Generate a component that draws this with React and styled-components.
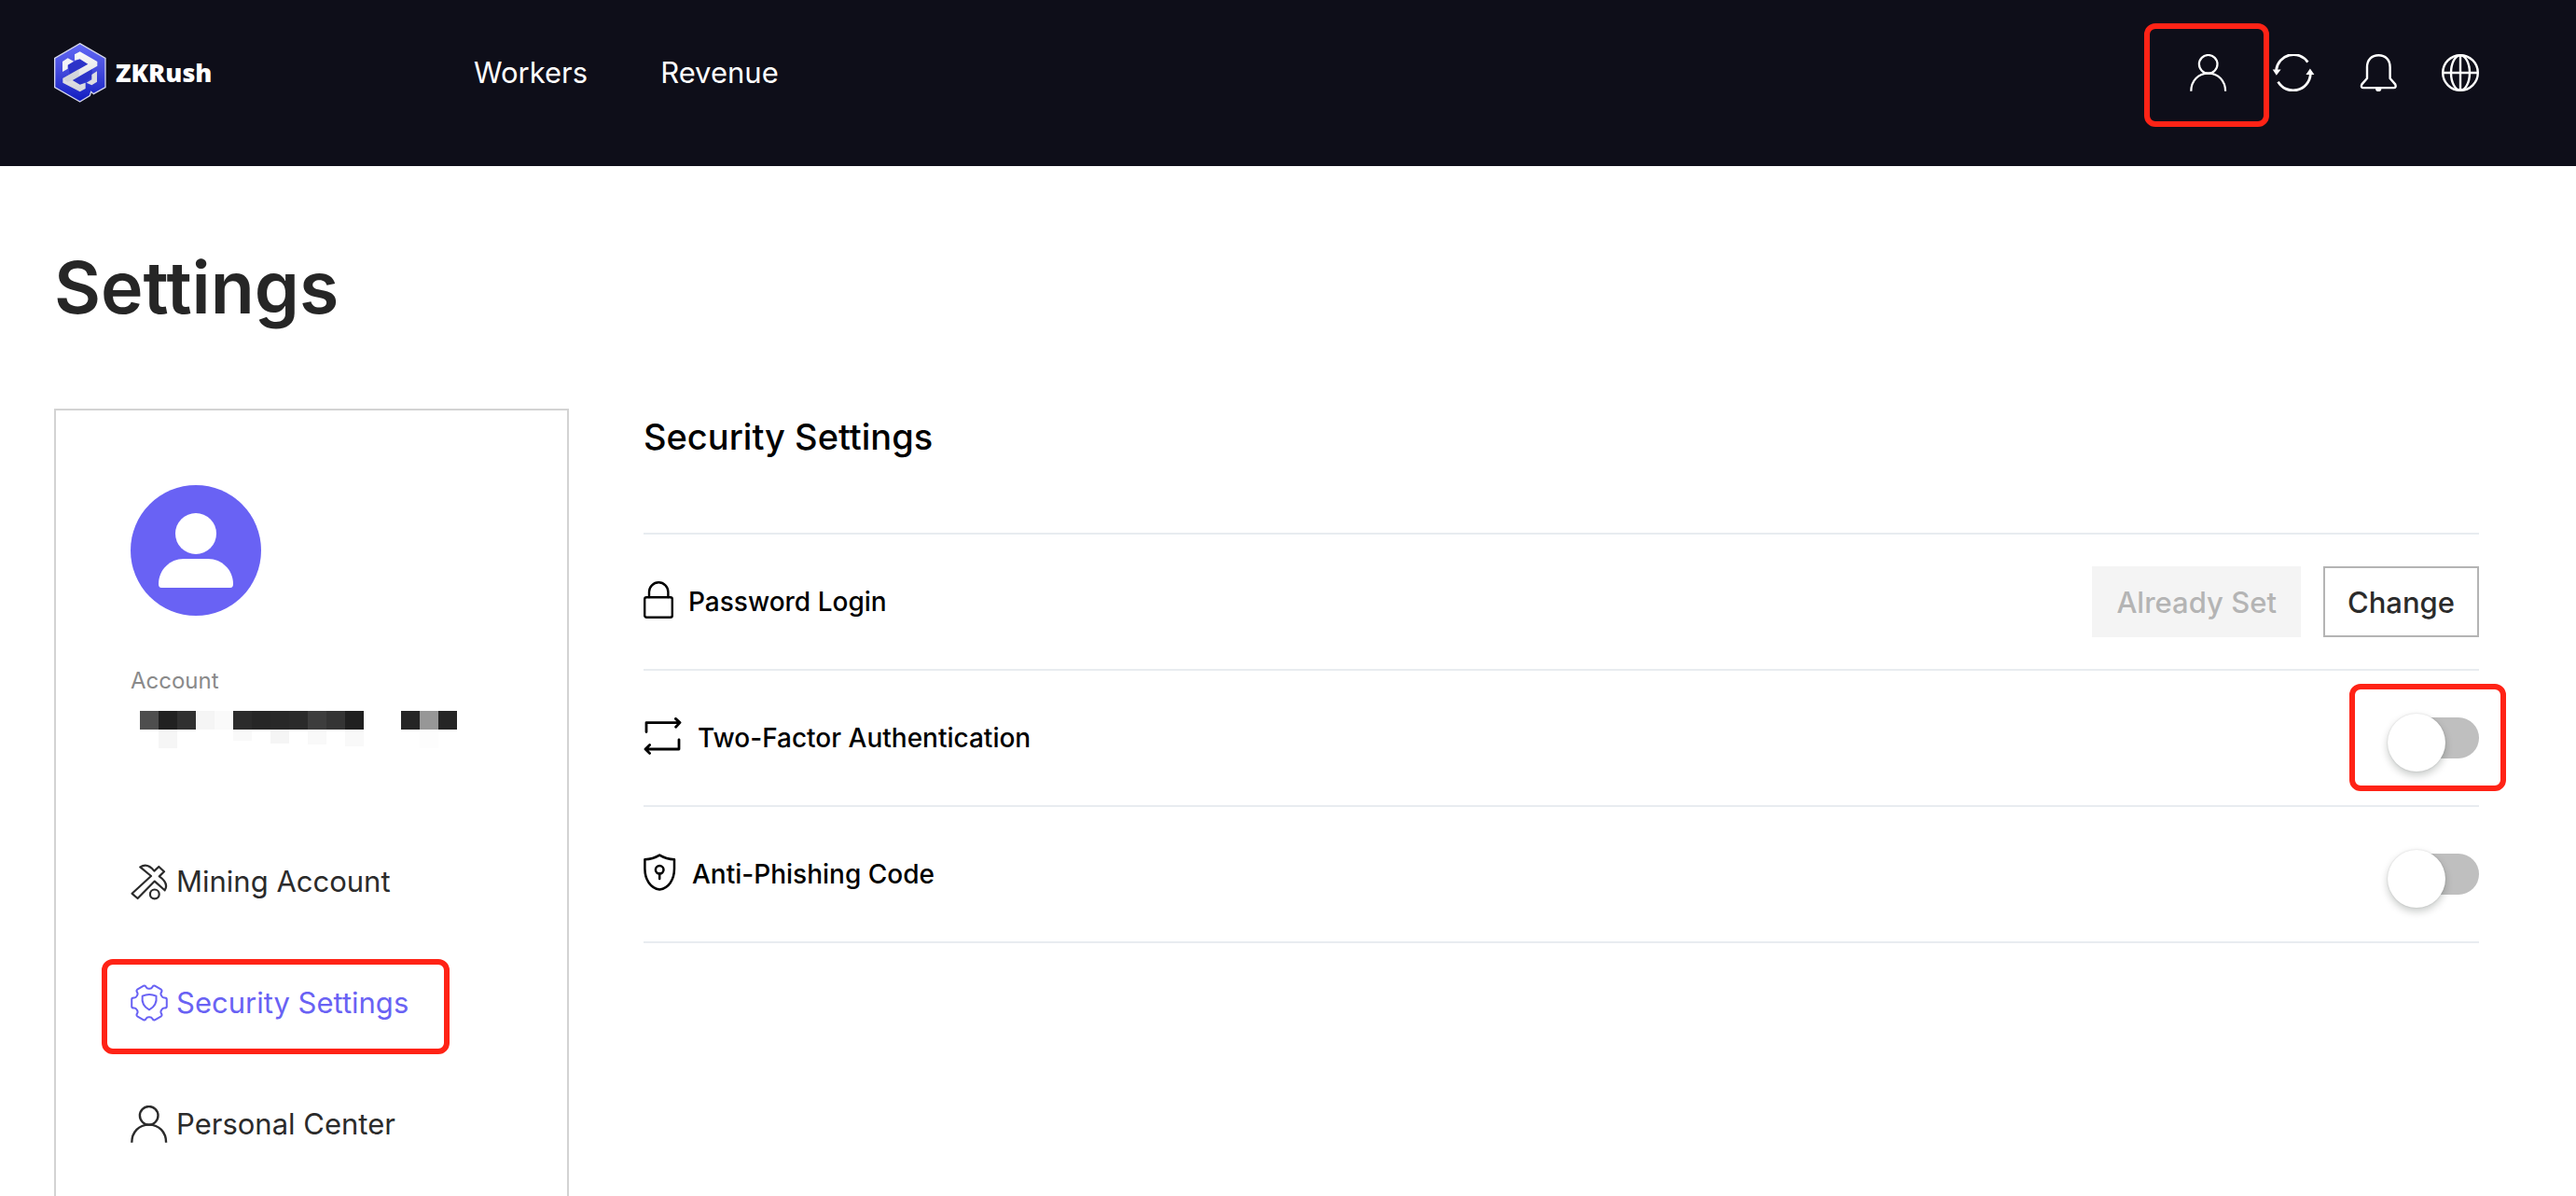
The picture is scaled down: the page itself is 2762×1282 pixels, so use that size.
import React from "react";
import styled, { createGlobalStyle } from "styled-components";

const GlobalStyle = createGlobalStyle`
  *, *::before, *::after { box-sizing: border-box; }
  body {
    margin: 0;
    background: #fff;
    color: #2b2b2b;
    font-family: Inter, "Liberation Sans", Arial, sans-serif;
  }
  h1, h2, p, ul { margin: 0; padding: 0; }
`;

const Page = styled.div`
  min-height: 100vh;
  display: flex;
  flex-direction: column;
`;

const Header = styled.header`
  display: flex;
  align-items: center;
  padding: 46px 104px 68px 58px;
  background: #0e0e19;
  color: #fff;
`;

const Brand = styled.a`
  display: flex;
  align-items: center;
  gap: 10px;
  min-width: 450px;
  color: #fff;
  text-decoration: none;
  font-family: "Noto Sans", "Open Sans", sans-serif;
  font-size: 27px;
  font-weight: 900;
  line-height: 40px;
`;

const TopNav = styled.nav`
  display: flex;
  flex: 1;
  gap: 78px;
`;

const TopLink = styled.a`
  color: #fff;
  text-decoration: none;
  font-size: 31px;
  line-height: 40px;
`;

const HeaderActions = styled.div`
  display: flex;
  gap: 48px;
`;

const IconButton = styled.button`
  position: relative;
  display: flex;
  padding: 0;
  border: 0;
  background: none;
  color: inherit;
`;

const Highlight = styled.span`
  position: absolute;
  inset: ${(p) => p.$inset};
  border: 6px solid #ff2316;
  border-radius: 12px;
  pointer-events: none;
`;

const Title = styled.h1`
  padding: 82px 58px;
  color: #262626;
  font-size: 77px;
  font-weight: 600;
  line-height: 96px;
`;

const Content = styled.div`
  flex: 1;
  display: grid;
  grid-template-columns: 552px minmax(0, 1fr);
  gap: 80px;
  padding: 0 104px 0 58px;
`;

const Sidebar = styled.aside`
  padding: 80px 80px 32px;
  border: 2px solid #d3d3d3;
  border-bottom: 0;
`;

const AccountLabel = styled.p`
  margin: 54px 0 16px;
  color: #8a8a8a;
  font-size: 24px;
  line-height: 32px;
`;

const Block = styled.svg`
  display: block;
`;

const SideList = styled.ul`
  display: grid;
  justify-items: start;
  gap: 90px;
  margin-top: 123px;
  list-style: none;
`;

const SideLink = styled.a`
  position: relative;
  display: flex;
  align-items: center;
  gap: 9px;
  color: ${(p) => (p.$active ? "#6962f4" : "#2b2b2b")};
  text-decoration: none;
  font-size: 31px;
  line-height: 40px;
  white-space: nowrap;
`;

const SectionTitle = styled.h2`
  margin-bottom: 73px;
  color: #000;
  font-size: 38px;
  font-weight: 500;
  line-height: 60px;
`;

const Rows = styled.div`
  border-top: 2px solid #e8ecf0;
`;

const Row = styled.div`
  display: flex;
  align-items: center;
  justify-content: space-between;
  min-height: 146px;
  border-bottom: 2px solid #e8ecf0;
`;

const RowLabel = styled.label`
  display: flex;
  align-items: center;
  gap: 16px;
  color: #000;
  font-size: 28px;
  font-weight: 500;
  line-height: 40px;

  svg { margin-bottom: 4px; }
`;

const RowActions = styled.div`
  position: relative;
  display: flex;
  gap: 24px;
`;

const Button = styled.button`
  height: 76px;
  padding: 0 24px;
  border: 2px solid #b4b4b4;
  border-radius: 0;
  background: #fff;
  color: #2b2b2b;
  font-family: inherit;
  font-size: 31px;
  font-weight: 500;

  &:disabled {
    border-color: #f4f4f4;
    background: #f4f4f4;
    color: #b4b4b4;
  }
`;

const Switch = styled.input`
  appearance: none;
  position: relative;
  width: 90px;
  height: 44px;
  margin: 0;
  border-radius: 22px;
  background: #bfbfbf;

  &::before {
    content: "";
    position: absolute;
    top: -4px;
    left: -8px;
    width: 62px;
    height: 62px;
    border-radius: 50%;
    background: #fff;
    box-shadow: 0 4px 8px rgba(0, 20, 10, 0.22), 0 0 2px rgba(0, 0, 0, 0.15);
  }

  &:checked { background: #6962f4; }
  &:checked::before { left: 36px; }
`;

const line = { fill: "none", stroke: "currentColor", strokeLinecap: "round", strokeLinejoin: "round" };

const Logo = () => (
  <svg width="56" height="64" viewBox="54 78 168 192" aria-hidden="true">
    <defs>
      <linearGradient id="hex" x1="0" y1="0" x2="0" y2="1">
        <stop offset="0" stopColor="#6168f6" />
        <stop offset="0.4" stopColor="#4a50e0" />
        <stop offset="1" stopColor="#101cc0" />
      </linearGradient>
      <linearGradient id="steel" x1="0" y1="0" x2="0" y2="1">
        <stop offset="0" stopColor="#fafafa" />
        <stop offset="1" stopColor="#d4d5da" />
      </linearGradient>
    </defs>
    <path d="M137 80 219 127V221L181 242 173 235 169 248 137 267 56 221V127Z" fill="url(#hex)" stroke="#d4d6ea" strokeWidth="4" />
    <path d="M137 130 165 147 105 181 98 148Z" fill="#2c33c8" />
    <path d="M176 161 176 190 137 212 113 198Z" fill="#2c33c8" />
    <path d="M120 115 137 106 193 138V152L113 198 137 212 155 206V225L137 235 82 206V192L163 146 137 130 120 134Z" fill="url(#steel)" />
    <path d="M81 138 98 127 117 137 98 149V161L81 171Z" fill="#f4f4f6" />
    <path d="M192 169V203L175 214 158 206 175 196V180Z" fill="#dcdde2" />
    <path d="M82 192 134 162 134 186 113 198 97 203Z" fill="#c3c5cd" opacity="0.5" />
  </svg>
);

const UserIcon = ({ width = 2.2 }) => (
  <svg width="40" height="40" viewBox="0 0 40 40" aria-hidden="true" {...line} strokeWidth={width} strokeLinecap="butt">
    <circle cx="19.7" cy="10.8" r="9.8" />
    <path d="M1.3 39.8C1.3 28.4 9 20.6 19.7 20.6S38.1 28.4 38.1 39.8" />
  </svg>
);

const RefreshIcon = () => (
  <svg width="46" height="40" viewBox="0 0 46 40" aria-hidden="true" {...line} strokeWidth="2.8" strokeLinecap="butt">
    <path d="M38.4 8.6A18.6 18.6 0 0 0 4.6 17" />
    <path d="M6.6 29.6A18.6 18.6 0 0 0 41.3 21.5" />
    <path d="M.7 16.4H9.6L4.8 22.8ZM36.4 22H45.4L40.9 15.6Z" fill="currentColor" stroke="none" />
  </svg>
);

const BellIcon = () => (
  <svg width="40" height="40" viewBox="0 0 40 40" aria-hidden="true" {...line} strokeWidth="2.4">
    <path d="M8 26V14C8 6 13 1.3 20.3 1.3S32.6 6 32.6 14V26L38.2 32.4Q39.6 36.1 36.4 36.1H4.2Q.9 36.1 2.4 32.4Z" />
    <path d="M17 37H23.4A3.2 3.2 0 0 1 17 37Z" fill="currentColor" stroke="none" />
  </svg>
);

const GlobeIcon = () => (
  <svg width="40" height="40" viewBox="0 0 40 40" aria-hidden="true" {...line} strokeWidth="2.4" strokeLinecap="butt">
    <circle cx="20" cy="20" r="18.8" />
    <ellipse cx="20" cy="20" rx="10" ry="18.8" />
    <path d="M20 1V39M1 20H39" />
  </svg>
);

const MiningIcon = () => (
  <svg width="40" height="40" viewBox="0 0 40 40" aria-hidden="true" {...line} strokeWidth="2.2">
    <path d="M10.3 4.4Q18-.6 25.4 8.6L30.3 4 36 9.3 30.8 14.4Q41.4 22 36.6 29.3L25.8 19.6 7.6 38 1.6 32.8 22 14Z" />
    <circle cx="25.8" cy="33.4" r="4.9" />
  </svg>
);

// Six-toothed outline: wide tooth tips joined by flat-bottomed dips.
const polar = (deg, r) => {
  const a = (deg * Math.PI) / 180;
  return `${(20 + r * Math.cos(a)).toFixed(2)} ${(20 + r * Math.sin(a)).toFixed(2)}`;
};
const gearPath =
  `M${polar(-12, 19.2)}` +
  [0, 60, 120, 180, 240, 300]
    .map((t) =>
      [
        `L${polar(t + 12, 19.2)}`,
        `Q${polar(t + 17, 19.4)} ${polar(t + 19, 17)}`,
        `Q${polar(t + 21, 15.2)} ${polar(t + 30, 15.2)}`,
        `Q${polar(t + 39, 15.2)} ${polar(t + 41, 17)}`,
        `Q${polar(t + 43, 19.4)} ${polar(t + 48, 19.2)}`,
      ].join("")
    )
    .join("") +
  "Z";

const GearIcon = () => (
  <svg width="40" height="40" viewBox="0 0 40 40" aria-hidden="true" {...line} strokeWidth="2">
    <path d={gearPath} />
    <path d="M12.7 12.6Q20 9.2 27.5 12.6Q28.8 22.8 20 27.4Q11.3 22.8 12.7 12.6Z" />
  </svg>
);

const LockIcon = () => (
  <svg width="32" height="40" viewBox="0 0 32 40" aria-hidden="true" {...line} strokeWidth="2.4">
    <rect x="1.2" y="17.2" width="29.6" height="21.6" rx="2" />
    <path d="M6 17V11.5A10.2 10.2 0 0 1 26.4 11.5V17" />
  </svg>
);

const SwapIcon = () => (
  <svg width="42" height="40" viewBox="0 0 42 40" aria-hidden="true" {...line} strokeWidth="2.8">
    <path d="M3 15.5V5.6H39M34.4 1.4 39 5.6 34.6 10.2" />
    <path d="M38 23.8V34H2M6.6 29.4 2 34 6.6 38.4" />
  </svg>
);

const ShieldIcon = () => (
  <svg width="36" height="40" viewBox="0 0 36 40" aria-hidden="true" {...line} strokeWidth="2.5">
    <path d="M17.2 1.6Q10 6 1.4 6.2V16C1.4 28 7.5 37 17.2 38.6 27 37 33 28 33 16V6.2Q24.5 6 17.2 1.6Z" />
    <circle cx="17.2" cy="17.3" r="4.3" />
    <path d="M17.2 21.6V27" />
  </svg>
);

const Avatar = () => (
  <Block width="140" height="140" viewBox="0 0 140 140" role="img" aria-label="Avatar">
    <circle cx="70" cy="70" r="70" fill="#6962f4" />
    <circle cx="70" cy="52" r="22" fill="#fff" />
    <path d="M57 79H83C98 79 110 91 110 106Q110 110 107 110H33Q30 110 30 106C30 91 42 79 57 79Z" fill="#fff" />
  </Block>
);

const CELL = 20;
const maskCells = [
  "#4e4e4e", "#212121", "#303030", "#f5f5f5", "#fafafa", "#2b2b2b", "#262626", "#282828", "#2a2a2a",
  "#3d3d3d", "#343434", "#202020", null, null, "#252525", "#979797", "#252525",
];
const maskShadows = [
  [1, "#f6f6f6", 20], [5, "#f9f9f9", 12], [7, "#f5f5f5", 15], [9, "#f9f9f9", 16],
  [11, "#f9f9f9", 18], [15, "#fdfdfd", 20],
];

const MaskedAccount = () => (
  <Block width="350" height="40" viewBox="-10 0 350 40" role="img" aria-label="Hidden account name" shapeRendering="crispEdges">
    {maskCells.map((c, i) => c && <rect key={i} x={i * CELL} width={CELL} height={CELL} fill={c} />)}
    {maskShadows.map(([i, c, h]) => (
      <rect key={i} x={i * CELL} y={CELL} width={CELL} height={h} fill={c} />
    ))}
  </Block>
);

export default function App() {
  return (
    <Page>
      <GlobalStyle />
      <Header>
        <Brand href="#home">
          <Logo />
          ZKRush
        </Brand>
        <TopNav>
          <TopLink href="#workers">Workers</TopLink>
          <TopLink href="#revenue">Revenue</TopLink>
        </TopNav>
        <HeaderActions>
          <IconButton aria-label="Account">
            <UserIcon />
            <Highlight $inset="-33px -45px -38px -49px" />
          </IconButton>
          <IconButton aria-label="Refresh"><RefreshIcon /></IconButton>
          <IconButton aria-label="Notifications"><BellIcon /></IconButton>
          <IconButton aria-label="Language"><GlobeIcon /></IconButton>
        </HeaderActions>
      </Header>

      <Title>Settings</Title>

      <Content>
        <Sidebar>
          <Avatar />
          <AccountLabel>Account</AccountLabel>
          <MaskedAccount />
          <SideList>
            <li>
              <SideLink href="#mining"><MiningIcon />Mining Account</SideLink>
            </li>
            <li>
              <SideLink href="#security" $active>
                <GearIcon />Security Settings
                <Highlight $inset="-27px -44px -35px -31px" />
              </SideLink>
            </li>
            <li>
              <SideLink href="#personal"><UserIcon width={2.4} />Personal Center</SideLink>
            </li>
          </SideList>
        </Sidebar>

        <main>
          <SectionTitle>Security Settings</SectionTitle>
          <Rows>
            <Row>
              <RowLabel as="div"><LockIcon />Password Login</RowLabel>
              <RowActions>
                <Button disabled>Already Set</Button>
                <Button>Change</Button>
              </RowActions>
            </Row>
            <Row>
              <RowLabel htmlFor="two-factor"><SwapIcon />Two-Factor Authentication</RowLabel>
              <RowActions>
                <Switch id="two-factor" type="checkbox" role="switch" />
                <Highlight $inset="-36px -29px -35px -49px" />
              </RowActions>
            </Row>
            <Row>
              <RowLabel htmlFor="anti-phishing"><ShieldIcon />Anti-Phishing Code</RowLabel>
              <RowActions>
                <Switch id="anti-phishing" type="checkbox" role="switch" />
              </RowActions>
            </Row>
          </Rows>
        </main>
      </Content>
    </Page>
  );
}
